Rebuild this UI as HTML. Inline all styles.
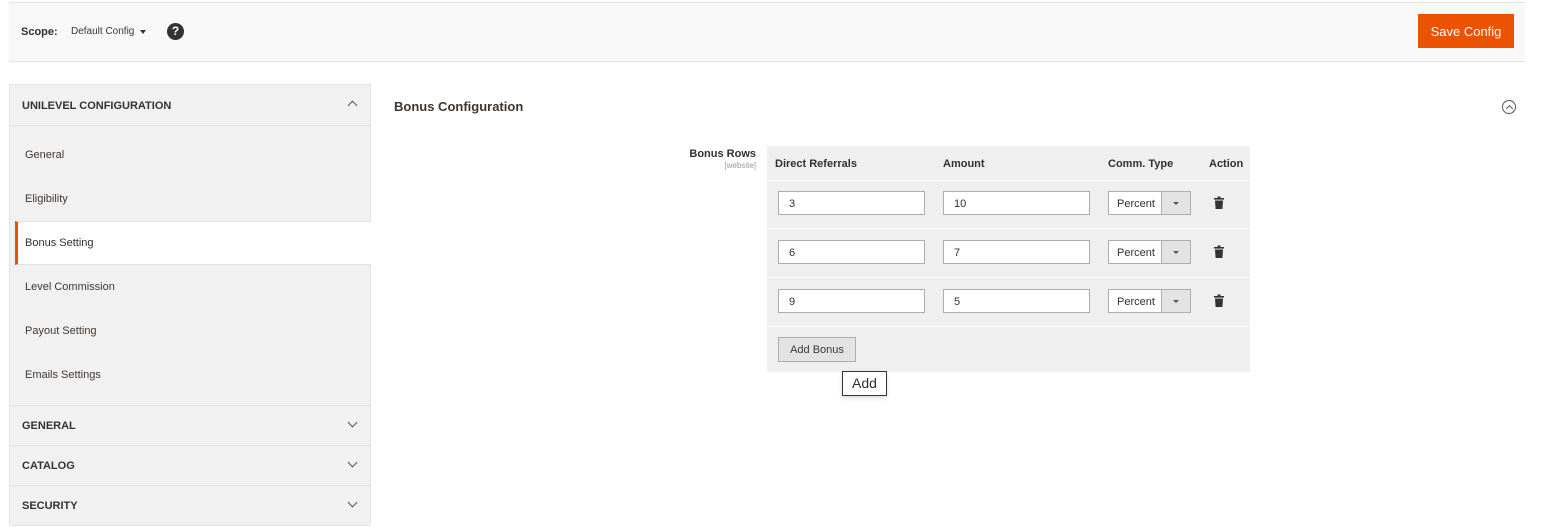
<!DOCTYPE html><html><head><style>
*{box-sizing:border-box}body{margin:0;width:1541px;height:515px;overflow:hidden;background:#fff;font-family:"Liberation Sans",sans-serif;color:#303030;position:relative}
.a{position:absolute}
.top{left:9px;top:2px;width:1516px;height:60px;background:#f8f8f8;border-top:1px solid #e3e3e3;border-bottom:1px solid #e3e3e3}
.side{left:9px;top:84px;width:362px;height:440px;background:#f1f1f1;border:1px solid #e3e3e3}
.hd{left:0;width:360px;font-weight:bold;font-size:11px;color:#333;padding-left:12px;border-bottom:1px solid #e3e3e3;background:#f1f1f1}
.it{left:15px;font-size:11px;color:#41362f}
.chev{position:absolute;right:14px;width:7px;height:7px;border-right:1.5px solid #555;border-bottom:1.5px solid #555}
.inp{position:absolute;height:24px;border:1px solid #adadad;background:#fff;font-size:11px;padding:6px 10px 4px;width:147px}
.sel{position:absolute;height:24px;width:83px;border:1px solid #adadad;background:#fff;font-size:11px;padding:6px 8px 4px}
.sel:after{content:"";position:absolute;right:0;top:0;width:28px;height:22px;background:#e3e3e3;border-left:1px solid #adadad}
.sel i{position:absolute;right:11px;top:10px;border:3px solid transparent;border-top:3px solid #555;z-index:2}
.trash{position:absolute;width:10px;height:13px}
</style></head><body>
<div class="a top"></div>
<div class="a" style="left:21px;top:26px;font-size:11px;font-weight:bold">Scope:</div>
<div class="a" style="left:71px;top:26px;font-size:10px;color:#41362f">Default Config</div>
<div class="a" style="left:140px;top:30px;border:3.5px solid transparent;border-top:4px solid #333"></div>
<div class="a" style="left:167px;top:23px;width:17px;height:17px;border-radius:50%;background:#333;color:#fff;font-weight:bold;font-size:12px;text-align:center;line-height:17px">?</div>
<div class="a" style="left:1418px;top:14px;width:96px;height:34px;background:#eb5202;color:#fff;font-size:13px;text-align:center;line-height:35px">Save Config</div>
<div class="a side">
<div class="a hd" style="top:0;height:41px;line-height:42px">UNILEVEL CONFIGURATION<span class="chev" style="top:17px;transform:rotate(-135deg)"></span></div>
<div class="a it" style="top:64px">General</div>
<div class="a it" style="top:108px">Eligibility</div>
<div class="a" style="left:5px;top:136px;width:356px;height:44px;background:#fff;border-left:3px solid #eb5202;border-top:1px solid #e3e3e3;border-bottom:1px solid #e3e3e3"></div>
<div class="a it" style="top:152px;color:#303030">Bonus Setting</div>
<div class="a it" style="top:196px">Level Commission</div>
<div class="a it" style="top:240px">Payout Setting</div>
<div class="a it" style="top:284px">Emails Settings</div>
<div class="a hd" style="top:320px;height:41px;line-height:41px;border-top:1px solid #e3e3e3">GENERAL<span class="chev" style="top:13px;transform:rotate(45deg)"></span></div>
<div class="a hd" style="top:361px;height:40px;line-height:41px">CATALOG<span class="chev" style="top:13px;transform:rotate(45deg)"></span></div>
<div class="a hd" style="top:401px;height:40px;line-height:41px">SECURITY<span class="chev" style="top:13px;transform:rotate(45deg)"></span></div>
</div>
<div class="a" style="left:394px;top:99px;font-size:13px;font-weight:bold;color:#41362f">Bonus Configuration</div>
<div class="a" style="left:1502px;top:100px;width:14px;height:14px;border:1px solid #555;border-radius:50%"><span style="position:absolute;left:3.5px;top:4.5px;width:5px;height:5px;border-left:1px solid #555;border-top:1px solid #555;transform:rotate(45deg)"></span></div>
<div class="a" style="left:680px;top:148px;width:76px;text-align:right;font-size:11px;font-weight:bold">Bonus Rows</div>
<div class="a" style="left:680px;top:161px;width:76px;text-align:right;font-size:8px;color:#999">[website]</div>
<div class="a" style="left:767px;top:146px;width:483px;height:226px;background:#efefef"></div>
<div class="a" style="left:775px;top:158px;font-size:11px;font-weight:bold">Direct Referrals</div>
<div class="a" style="left:943px;top:158px;font-size:11px;font-weight:bold">Amount</div>
<div class="a" style="left:1108px;top:158px;font-size:11px;font-weight:bold">Comm. Type</div>
<div class="a" style="left:1209px;top:158px;font-size:11px;font-weight:bold">Action</div>
<div class="a" style="left:767px;top:180px;width:483px;height:1px;background:#fff"></div>
<div class="a" style="left:767px;top:228px;width:483px;height:1px;background:#fff"></div>
<div class="a" style="left:767px;top:277px;width:483px;height:1px;background:#fff"></div>
<div class="a" style="left:767px;top:326px;width:483px;height:1px;background:#fff"></div>
<div class="inp" style="left:778px;top:191px">3</div><div class="inp" style="left:943px;top:191px">10</div><div class="sel" style="left:1108px;top:191px">Percent<i></i></div>
<div class="inp" style="left:778px;top:240px">6</div><div class="inp" style="left:943px;top:240px">7</div><div class="sel" style="left:1108px;top:240px">Percent<i></i></div>
<div class="inp" style="left:778px;top:289px">9</div><div class="inp" style="left:943px;top:289px">5</div><div class="sel" style="left:1108px;top:289px">Percent<i></i></div>
<svg class="trash" style="left:1214px;top:196px" viewBox="0 0 10 13"><rect x="0" y="2" width="10" height="1.6" fill="#333"/><rect x="3.5" y="0.5" width="3" height="2" fill="#333"/><path d="M1 4.5h8l-.6 8.5H1.6z" fill="#333"/></svg>
<svg class="trash" style="left:1214px;top:245px" viewBox="0 0 10 13"><rect x="0" y="2" width="10" height="1.6" fill="#333"/><rect x="3.5" y="0.5" width="3" height="2" fill="#333"/><path d="M1 4.5h8l-.6 8.5H1.6z" fill="#333"/></svg>
<svg class="trash" style="left:1214px;top:294px" viewBox="0 0 10 13"><rect x="0" y="2" width="10" height="1.6" fill="#333"/><rect x="3.5" y="0.5" width="3" height="2" fill="#333"/><path d="M1 4.5h8l-.6 8.5H1.6z" fill="#333"/></svg>
<div class="a" style="left:778px;top:337px;width:78px;height:25px;background:#e3e3e3;border:1px solid #adadad;font-size:11px;text-align:center;line-height:25px;color:#41362f">Add Bonus</div>
<div class="a" style="left:842px;top:371px;width:45px;height:25px;background:#fff;border:1px solid #333;font-size:14px;text-align:center;line-height:23px;box-shadow:0 2px 4px rgba(0,0,0,.15)">Add</div>
</body></html>
